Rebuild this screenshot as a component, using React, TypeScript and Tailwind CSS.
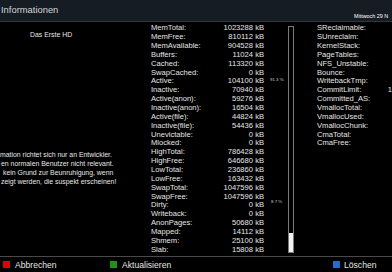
const left: [string, string][] = [
  ["MemTotal:", "1023288 kB"],
  ["MemFree:", "810112 kB"],
  ["MemAvailable:", "904528 kB"],
  ["Buffers:", "11024 kB"],
  ["Cached:", "113320 kB"],
  ["SwapCached:", "0 kB"],
  ["Active:", "104100 kB"],
  ["Inactive:", "70940 kB"],
  ["Active(anon):", "59276 kB"],
  ["Inactive(anon):", "16504 kB"],
  ["Active(file):", "44824 kB"],
  ["Inactive(file):", "54436 kB"],
  ["Unevictable:", "0 kB"],
  ["Mlocked:", "0 kB"],
  ["HighTotal:", "786428 kB"],
  ["HighFree:", "646680 kB"],
  ["LowTotal:", "236860 kB"],
  ["LowFree:", "163432 kB"],
  ["SwapTotal:", "1047596 kB"],
  ["SwapFree:", "1047596 kB"],
  ["Dirty:", "0 kB"],
  ["Writeback:", "0 kB"],
  ["AnonPages:", "50680 kB"],
  ["Mapped:", "14112 kB"],
  ["Shmem:", "25100 kB"],
  ["Slab:", "15808 kB"],
];

// values of the right column lie past the screen edge, only CommitLimit peeks in
const right: [string, string][] = [
  ["SReclaimable:", ""],
  ["SUnreclaim:", ""],
  ["KernelStack:", ""],
  ["PageTables:", ""],
  ["NFS_Unstable:", ""],
  ["Bounce:", ""],
  ["WritebackTmp:", ""],
  ["CommitLimit:", "1"],
  ["Committed_AS:", ""],
  ["VmallocTotal:", ""],
  ["VmallocUsed:", ""],
  ["VmallocChunk:", ""],
  ["CmaTotal:", ""],
  ["CmaFree:", ""],
];

function Rows({ rows, edge }: { rows: [string, string][]; edge?: boolean }) {
  return (
    <div className={edge ? "w-[75px] shrink-0 pt-[2.3px]" : "w-[113px] shrink-0 pt-[2.3px]"}>
      {rows.map(([k, v]) => (
        <div key={k} className="flex h-[8.86px] items-center justify-between whitespace-nowrap leading-[8.86px]">
          <span>{k}</span>
          <span>{v}</span>
        </div>
      ))}
    </div>
  );
}

export default function App() {
  return (
    <div
      className="flex h-[272px] w-[392px] flex-col overflow-hidden bg-black text-[#e6e6e6]"
      style={{ fontFamily: '"Liberation Sans", Arial, sans-serif' }}
    >
      <header className="flex h-[22px] shrink-0 items-start overflow-hidden border-b border-[#30363e] bg-[#161c24]">
        <div className="w-[354px] shrink-0 pl-px pt-[4px] text-[9.4px] leading-[12px] text-[#d4d6d8]">Informationen</div>
        <div className="whitespace-nowrap pt-[13px] text-[5.4px] leading-[6px] text-white">Mittwoch 29 N</div>
      </header>

      <main className="flex h-[234px] shrink-0 text-[7.6px]">
        <div className="w-[151px] shrink-0 text-[6.9px]">
          <div className="pl-[30px] pt-[9px] leading-[8px]">Das Erste HD</div>
          <div className="mt-[111px] whitespace-nowrap leading-[9px]">
            <div>mation richtet sich nur an Entwickler.</div>
            <div className="pl-px">en normalen Benutzer nicht relevant.</div>
            <div className="pl-[3px]">kein Grund zur Beunruhigung, wenn</div>
            <div className="pl-px">zeigt werden, die suspekt erscheinen!</div>
          </div>
        </div>

        <Rows rows={left} />

        <div className="flex w-[53px] shrink-0">
          <div className="ml-[6px] flex w-[18px] flex-col text-[4.4px] leading-[5px] text-[#cfcfcf]">
            <span className="mt-[55px]">91.3 %</span>
            <span className="mt-[117px] pl-px">8.7 %</span>
          </div>
          <div className="mt-[4px] flex h-[227px] w-[6px] flex-col justify-end border border-[#7a7a7a]">
            <div className="h-[19px] bg-[#f2f2f2]" />
          </div>
        </div>

        <Rows rows={right} edge />
      </main>

      <footer className="flex flex-1 items-center border-t border-[#4a4a4a] text-[8.6px] leading-[10px]">
        <div className="flex w-[110px] items-center pl-[3px]">
          <span className="h-[7px] w-[7px] bg-[#e30000]" />
          <span className="ml-[5px]">Abbrechen</span>
        </div>
        <div className="flex items-center">
          <span className="h-[7px] w-[7px] bg-[#259019]" />
          <span className="ml-[5px]">Aktualisieren</span>
        </div>
        <div className="ml-auto flex w-[59px] items-center">
          <span className="h-[7px] w-[7px] bg-[#1b6fd1]" />
          <span className="ml-[4px]">Löschen</span>
        </div>
      </footer>
    </div>
  );
}
